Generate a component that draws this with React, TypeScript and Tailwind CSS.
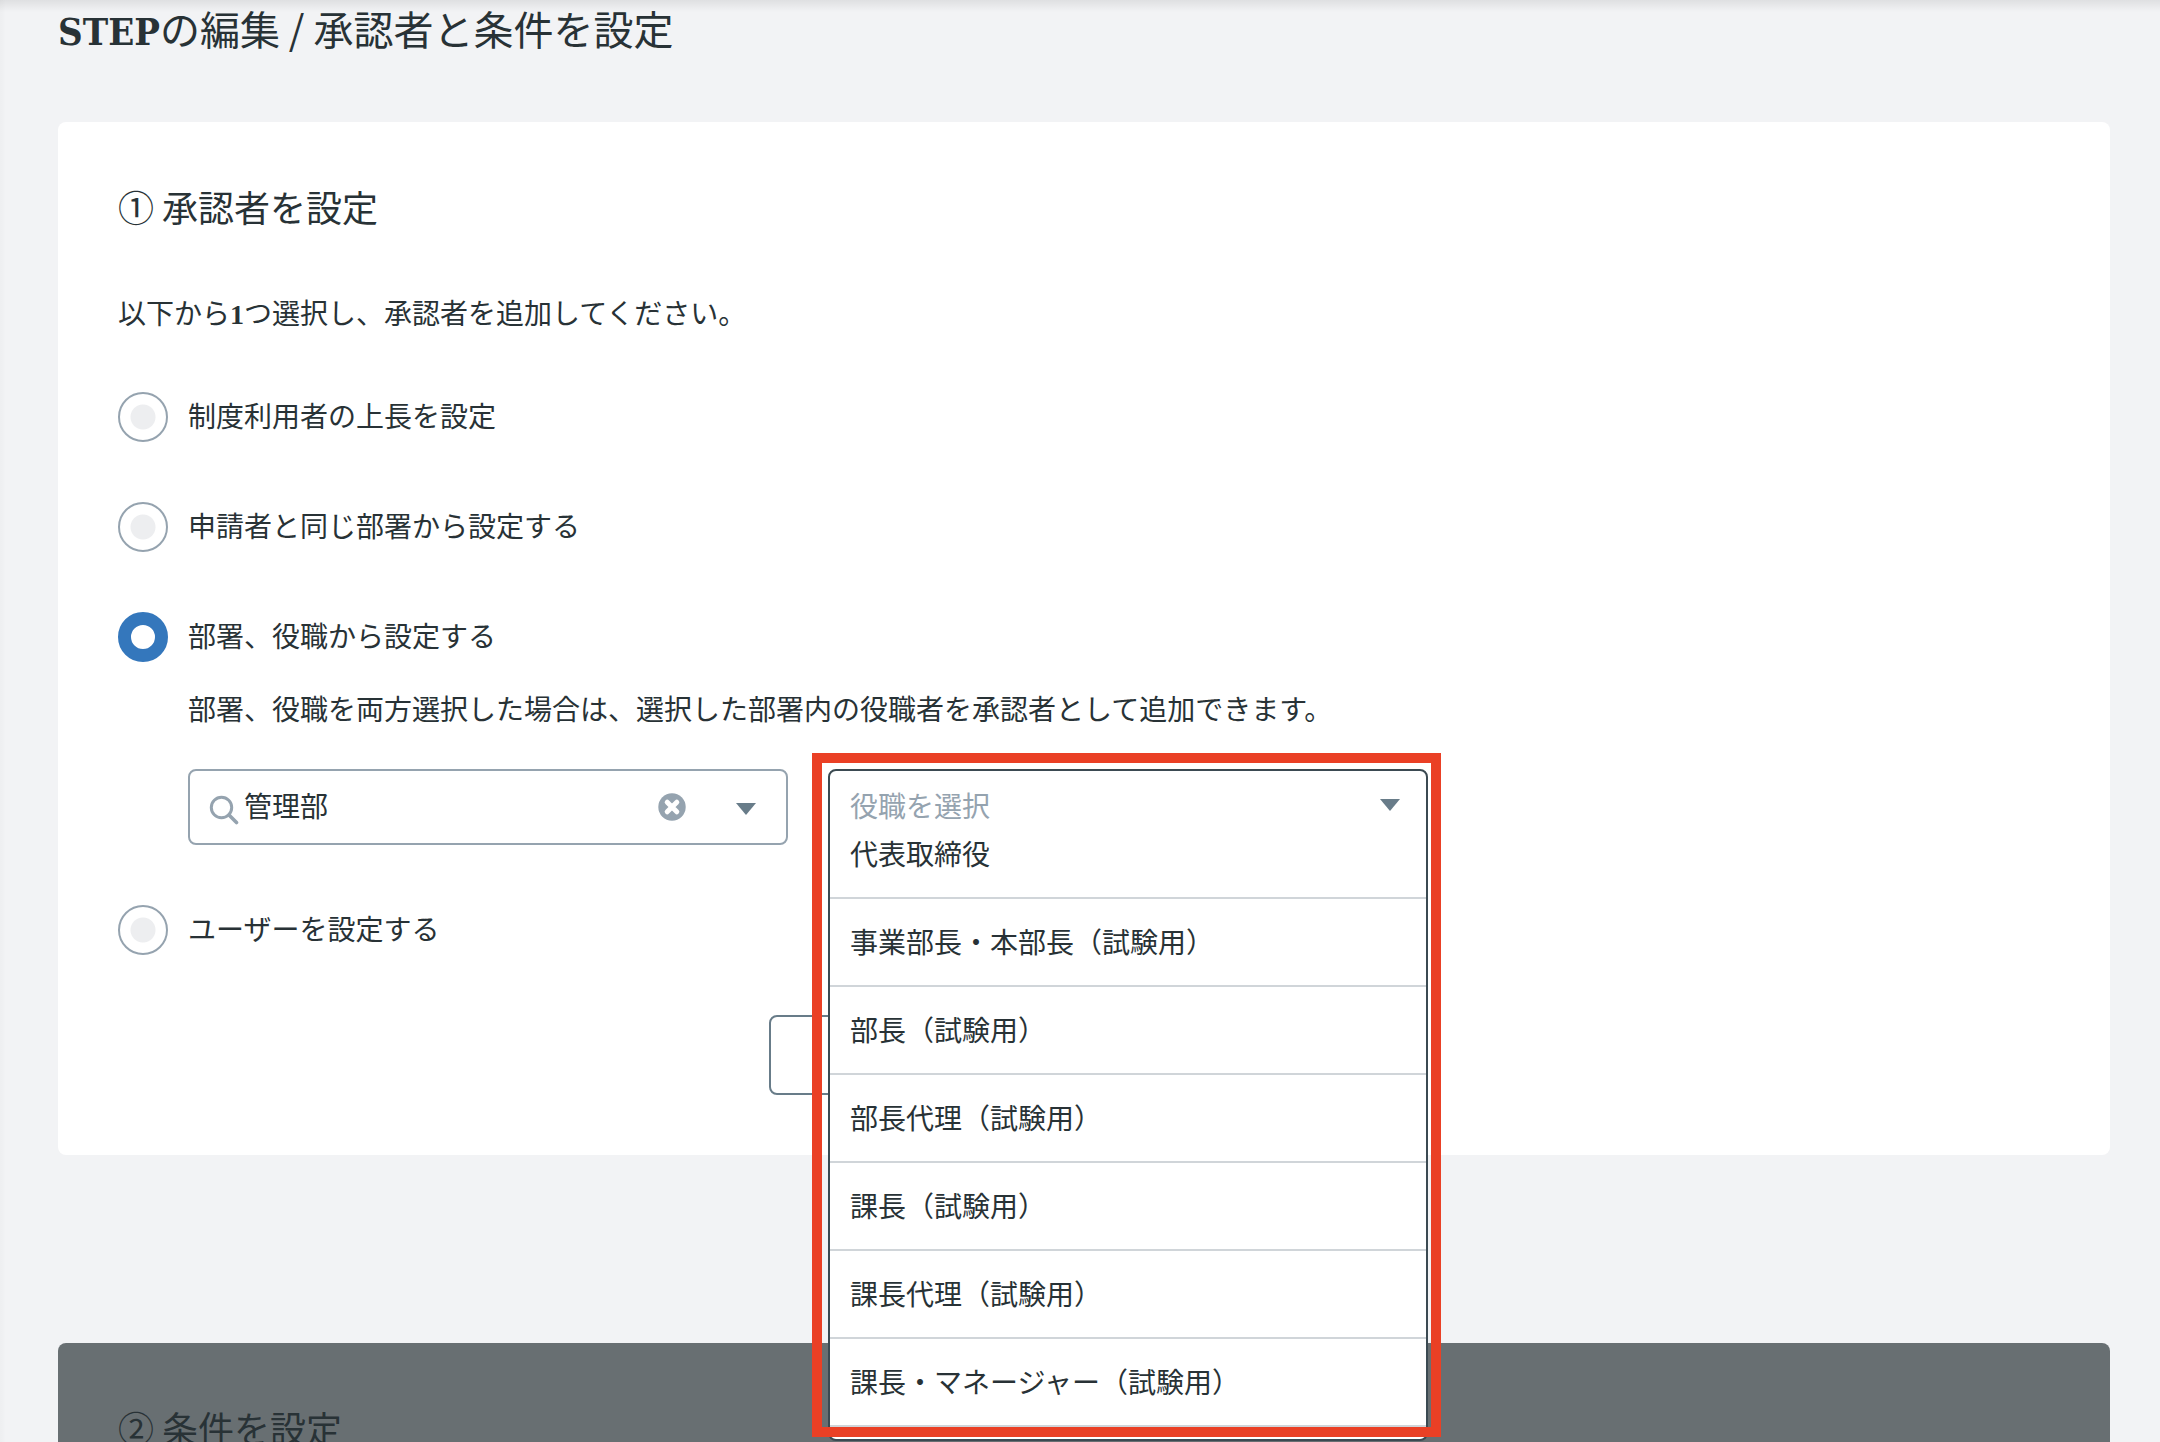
import { useState } from "react";

const positions = [
  "代表取締役",
  "事業部長・本部長（試験用）",
  "部長（試験用）",
  "部長代理（試験用）",
  "課長（試験用）",
  "課長代理（試験用）",
  "課長・マネージャー（試験用）",
];

function Caret() {
  return (
    <svg width="20" height="12" viewBox="0 0 20 12" aria-hidden="true">
      <path d="M0 0h20L10 12z" fill="#687c89" />
    </svg>
  );
}

function SearchIcon() {
  return (
    <svg width="30" height="30" viewBox="0 0 30 30" fill="none" stroke="#95a3af" aria-hidden="true">
      <circle cx="12.5" cy="12.5" r="10.2" strokeWidth="3" />
      <path d="M20 20l7.5 7.5" strokeWidth="3.6" strokeLinecap="round" />
    </svg>
  );
}

function ClearIcon() {
  return (
    <svg width="28" height="28" viewBox="0 0 28 28" aria-hidden="true">
      <circle cx="14" cy="14" r="13.7" fill="#95a3af" />
      <path d="M9.2 9.2l9.6 9.6M18.8 9.2l-9.6 9.6" stroke="#fff" strokeWidth="5" strokeLinecap="round" />
    </svg>
  );
}

function RadioOption({
  id,
  label,
  selected,
  onSelect,
}: {
  id: string;
  label: string;
  selected: string;
  onSelect: (id: string) => void;
}) {
  return (
    <label htmlFor={id} className="flex w-fit items-center gap-5">
      <input
        id={id}
        type="radio"
        name="approver"
        checked={selected === id}
        onChange={() => onSelect(id)}
        className="size-[50px] appearance-none rounded-full border-2 border-[#95a3af] bg-white bg-[radial-gradient(circle,#edeef0_12px,transparent_13px)] checked:border-[13px] checked:border-[#3477bc] checked:bg-none"
      />
      <span className="pb-1 leading-10">{label}</span>
    </label>
  );
}

export default function App() {
  const [selected, setSelected] = useState("department");
  const [department, setDepartment] = useState("管理部");

  return (
    <div className="relative h-screen overflow-hidden bg-[#f2f3f5] pr-[50px] pl-[58px] font-['Noto_Sans_CJK_JP',sans-serif] text-[28px] text-[#283236]">
      <div className="absolute inset-x-0 top-0 h-3 bg-linear-to-b from-black/8 to-transparent" />
      <div className="absolute inset-y-0 left-0 w-1.5 bg-linear-to-r from-black/2 to-transparent" />

      <h1 className="pb-[66px] text-[40px] leading-14">
        <span className="font-['DejaVu_Serif_Condensed','DejaVu_Serif',serif] text-[38px] leading-none font-bold">STEP</span>の編集 / 承認者と条件を設定
      </h1>

      <section className="rounded-lg bg-white px-[60px] pt-[60px] pb-[60px]">
        <h2 className="text-[36px] leading-12">① 承認者を設定</h2>
        <p className="mt-[62px] leading-10">
          以下から<span className="font-['Liberation_Serif',serif] leading-none font-bold">1</span>つ選択し、承認者を追加してください。
        </p>

        <div className="mt-[60px] flex flex-col gap-[60px]">
          <RadioOption id="manager" label="制度利用者の上長を設定" selected={selected} onSelect={setSelected} />
          <RadioOption id="same" label="申請者と同じ部署から設定する" selected={selected} onSelect={setSelected} />
          <div>
            <RadioOption id="department" label="部署、役職から設定する" selected={selected} onSelect={setSelected} />
            <div className="mt-[26px] pl-[70px]">
              <p className="leading-10">部署、役職を両方選択した場合は、選択した部署内の役職者を承認者として追加できます。</p>
              <div className="mt-[41px] flex gap-10">
                <div className="flex h-[76px] w-[600px] items-center rounded-lg border-2 border-[#95a3af] bg-white pr-[30px] pl-[19px]">
                  <span className="mt-1.5">
                    <SearchIcon />
                  </span>
                  <input
                    aria-label="部署"
                    value={department}
                    onChange={(e) => setDepartment(e.target.value)}
                    className="mb-1 ml-[5px] h-10 min-w-0 flex-1 outline-none"
                  />
                  <button type="button" aria-label="クリア" onClick={() => setDepartment("")}>
                    <ClearIcon />
                  </button>
                  <button type="button" aria-label="部署を開く" className="mt-1 ml-[50px]">
                    <Caret />
                  </button>
                </div>

                <div className="relative w-[600px]">
                  <div className="absolute inset-x-0 top-0 h-[672px] overflow-hidden rounded-lg border-2 border-[#3b4a52] bg-white">
                    <button
                      type="button"
                      aria-haspopup="listbox"
                      aria-expanded="true"
                      className="-mb-7 flex h-[68px] w-full items-center justify-between pr-[26px] pl-5 text-[#95a3af]"
                    >
                      役職を選択
                      <Caret />
                    </button>
                    <ul role="listbox" aria-label="役職">
                      {positions.map((p) => (
                        <li
                          key={p}
                          role="option"
                          aria-selected="false"
                          className="flex h-[88px] items-center border-b-2 border-[#d0d5d9] pb-0.5 pl-5"
                        >
                          {p}
                        </li>
                      ))}
                    </ul>
                  </div>
                  <div className="pointer-events-none absolute -top-4 -right-[13px] -left-4 h-[684px] border-10 border-[#ea4025]" />
                </div>
              </div>
            </div>
          </div>
          <RadioOption id="user" label="ユーザーを設定する" selected={selected} onSelect={setSelected} />
        </div>

        <button
          type="button"
          aria-label="追加"
          className="mx-auto mt-[60px] block h-20 w-[630px] rounded-lg border-2 border-[#687c89] bg-white"
        />
      </section>

      <section className="mt-[188px] rounded-lg bg-[#686f72] px-[60px] pt-[60px] pb-[60px]">
        <h2 className="text-[36px] leading-12">② 条件を設定</h2>
      </section>
    </div>
  );
}
